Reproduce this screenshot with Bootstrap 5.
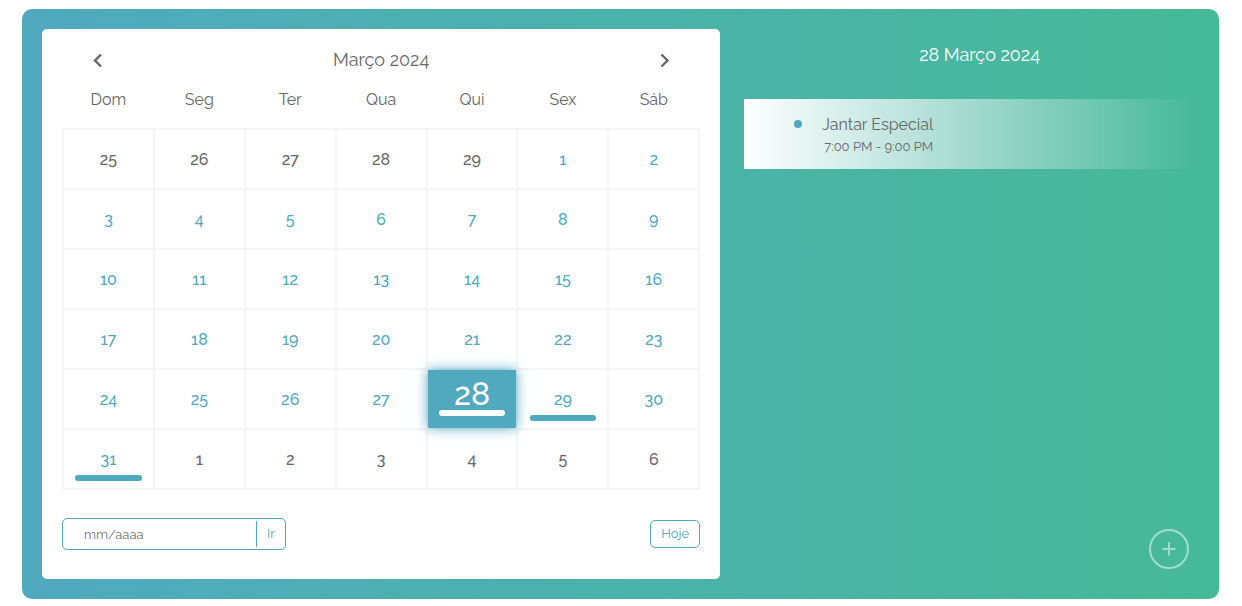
<!DOCTYPE html>
<html lang="pt-BR">
<head>
<meta charset="utf-8">
<meta name="viewport" content="width=device-width, initial-scale=1">
<title>Calendário</title>
<link href="https://cdn.jsdelivr.net/npm/bootstrap@5.3.0/dist/css/bootstrap.min.css" rel="stylesheet">
<style>
  :root { --teal: #50a9be; --green: #46ba97; --ink: #666; --grid: #f5f5f5; }
  body { font-family: Raleway, Lato, sans-serif; color: var(--ink); background: #fff; }
  button, input { font-family: inherit; color: inherit; }
  .page-wrap { padding: 9px 23px 7px 22px; }
  .planner { background: linear-gradient(to right, var(--teal), var(--green)); border-radius: 10px; }
  .month-side { padding: 20px 0 20px 20px; }
  .month-panel { border-radius: 5px; padding: 20px 20px 29px; }
  .month-bar { height: 22px; padding: 0 20px; font-size: 18px; line-height: 22px; }
  .arrow { width: 32px; height: 22px; }
  .month-grid { table-layout: fixed; border-collapse: collapse; }
  .month-grid th { height: 58px; font-size: 16px; font-weight: 400; padding: 0; }
  .month-grid td { height: 60px; padding: 0; border: 2px solid var(--grid); }
  .day { width: 100%; height: 58px; padding: 18px 0 0; border: 0; background: none; font-size: 16px; line-height: 24px; font-weight: 500; }
  .in-month { color: var(--teal); }
  .busy::after { content: ""; width: 75%; height: 6px; margin-top: 3px; border-radius: 3px; background: currentColor; }
  .chosen { z-index: 1; background: var(--teal); color: #fff; font-size: 32px; line-height: 32px; padding-top: 8px; box-shadow: 0 0 12px var(--teal); }
  .chosen::after { margin-top: 0; }
  .foot { margin-top: 28px; font-size: 13px; line-height: 20px; }
  .goto { width: 224px; height: 32px; border: 1px solid var(--teal); border-radius: 5px; padding: 2px 0; }
  .goto input { min-width: 0; border: 0; padding: 2px 21px 0; outline: 0; }
  .goto input::placeholder { color: #757575; }
  .goto button { width: 29px; border: 0; border-left: 1px solid var(--teal); color: var(--teal); }
  .today { width: 50px; height: 28px; border: 1px solid var(--teal); border-radius: 5px; color: var(--teal); }
  .agenda { padding: 34px 4px 30px 24px; }
  .agenda h2 { font-size: 18px; line-height: 24px; font-weight: 400; margin: 0 0 32px; }
  .event-item { height: 70px; padding: 14px 50px; background: linear-gradient(to right, #fff, rgba(70, 186, 151, 0) 95%); }
  .event-dot { width: 8px; height: 8px; margin: 7px 20px 0 0; background: var(--teal); }
  .event-title { font-size: 16px; line-height: 24px; }
  .event-time { font-size: 13px; line-height: 20px; padding-left: 2px; }
  .add-btn { width: 40px; height: 40px; margin-right: 26px; border: 2px solid #fff; opacity: .5; }
</style>
</head>
<body>
<main class="page-wrap">
  <div class="planner row g-0">
    <section class="month-side col-7">
      <div class="month-panel bg-white">
        <div class="month-bar d-flex justify-content-between align-items-center">
          <button type="button" class="arrow btn border-0 p-0 d-flex align-items-center justify-content-center" aria-label="Mês anterior">
            <svg width="12" height="16" viewBox="0 0 12 16" fill="none" stroke="#666" stroke-width="2.4"><path d="M9 2.500 3 8.500 9 14.500"/></svg>
          </button>
          <div>Março 2024</div>
          <button type="button" class="arrow btn border-0 p-0 d-flex align-items-center justify-content-center" aria-label="Próximo mês">
            <svg width="12" height="16" viewBox="0 0 12 16" fill="none" stroke="#666" stroke-width="2.4"><path d="M3.500 2.500 9.500 8.500 3.500 14.500"/></svg>
          </button>
        </div>
        <table class="month-grid w-100 text-center">
          <thead><tr><th>Dom</th><th>Seg</th><th>Ter</th><th>Qua</th><th>Qui</th><th>Sex</th><th>Sáb</th></tr></thead>
          <tbody id="days"></tbody>
        </table>
        <div class="foot d-flex justify-content-between align-items-center">
          <form class="goto d-flex" onsubmit="return false">
            <input class="flex-grow-1 bg-transparent" type="text" placeholder="mm/aaaa" aria-label="Mês e ano">
            <button class="flex-shrink-0 bg-transparent p-0" type="submit">Ir</button>
          </form>
          <button type="button" class="today bg-transparent p-0">Hoje</button>
        </div>
      </div>
    </section>
    <section class="agenda col-5 d-flex flex-column">
      <h2 class="text-white text-center">28 Março 2024</h2>
      <div class="event-item d-flex align-items-start">
        <span class="event-dot rounded-circle flex-shrink-0"></span>
        <div>
          <div class="event-title">Jantar Especial</div>
          <div class="event-time">7:00 PM - 9:00 PM</div>
        </div>
      </div>
      <button type="button" class="add-btn rounded-circle bg-transparent p-0 mt-auto align-self-end d-flex align-items-center justify-content-center" aria-label="Adicionar evento">
        <svg width="14" height="14" viewBox="0 0 14 14" stroke="#fff" stroke-width="2" stroke-linecap="round"><path d="M7 1v12M1 7h12"/></svg>
      </button>
    </section>
  </div>
</main>
<script src="https://cdn.jsdelivr.net/npm/bootstrap@5.3.0/dist/js/bootstrap.bundle.min.js"></script>
<script>
  const body = document.getElementById('days');
  const busy = [28, 29, 31], chosen = 28;
  const first = new Date(2024, 1, 25);
  for (let w = 0; w < 6; w++) {
    const row = body.insertRow();
    for (let d = 0; d < 7; d++) {
      const date = new Date(first.getFullYear(), first.getMonth(), first.getDate() + w * 7 + d);
      const day = document.createElement('button');
      day.type = 'button';
      day.className = 'day d-flex flex-column align-items-center';
      day.textContent = date.getDate();
      if (date.getMonth() === 2) {
        day.classList.add('in-month');
        if (busy.includes(date.getDate())) day.classList.add('busy');
        if (date.getDate() === chosen) day.classList.add('chosen', 'position-relative');
      }
      row.insertCell().append(day);
    }
  }
</script>
</body>
</html>
